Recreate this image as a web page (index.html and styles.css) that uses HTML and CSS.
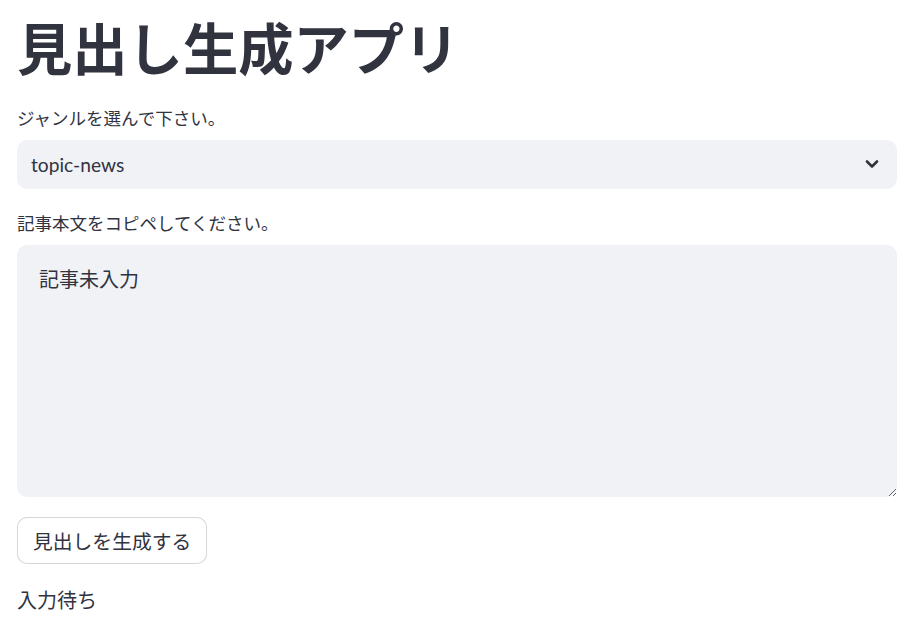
FILE: index.html
```html
<!DOCTYPE html>
<html lang="ja">
<head>
<meta charset="utf-8">
<title>見出し生成アプリ</title>
<link rel="stylesheet" href="styles.css">
</head>
<body>
<main class="app">
  <h1 class="title">見出し生成アプリ</h1>
  <div class="field field-select">
    <label class="label">ジャンルを選んで下さい。</label>
    <div class="select">
      <span class="select-value">topic-news</span>
      <svg class="chevron" width="14" height="10" viewBox="0 0 14 10"><path d="M2 2.5 L7 7.5 L12 2.5" fill="none" stroke="#31333F" stroke-width="2.6" stroke-linecap="round" stroke-linejoin="round"/></svg>
    </div>
  </div>
  <div class="field field-text">
    <label class="label">記事本文をコピペしてください。</label>
    <textarea class="textarea">記事未入力</textarea>
  </div>
  <button class="btn">見出しを生成する</button>
  <p class="status">入力待ち</p>
</main>
</body>
</html>
```
FILE: styles.css
```css
html, body {
  margin: 0;
  padding: 0;
  background: #ffffff;
}
body {
  font-family: "Lato", "Noto Sans CJK JP", sans-serif;
  color: #31333F;
}
.app {
  width: 880px;
  padding: 0 0 0 17px;
  display: flex;
  flex-direction: column;
  align-items: flex-start;
}
.title {
  margin: 13px 0 0 0;
  font-size: 55.3px;
  font-weight: 700;
  line-height: 1.2;
  letter-spacing: 0;
  color: #31333F;
  font-family: "Noto Sans CJK JP", sans-serif;
}
.field {
  width: 880px;
  display: flex;
  flex-direction: column;
}
.field-select { margin-top: 28px; }
.field-text { margin-top: 23.5px; }
.label {
  font-size: 17.5px;
  line-height: 22px;
  font-family: "Noto Sans CJK JP", sans-serif;
  font-weight: 400;
  margin-bottom: 10.5px;
}
.select {
  height: 49px;
  background: #F0F2F6;
  border-radius: 10px;
  display: flex;
  align-items: center;
  justify-content: space-between;
  padding: 0 18px 0 14px;
  box-sizing: border-box;
}
.select-value {
  font-size: 19.2px;
  font-family: "Lato", "Noto Sans CJK JP", sans-serif;
}
.chevron { display: block; }
.textarea {
  width: 880px;
  height: 252px;
  box-sizing: border-box;
  background: #F0F2F6;
  border: none;
  border-radius: 10px;
  padding: 18px 22px;
  font-family: "Noto Sans CJK JP", sans-serif;
  font-size: 20px;
  line-height: 1.6;
  color: #31333F;
  resize: vertical;
  outline: none;
  margin: 0;
  display: block;
}
.btn {
  margin-top: 20px;
  height: 47px;
  padding: 0 15px;
  background: #ffffff;
  border: 1px solid rgba(49, 51, 63, 0.2);
  border-radius: 10px;
  font-family: "Noto Sans CJK JP", sans-serif;
  font-size: 19.8px;
  color: #31333F;
}
.status {
  margin: 20px 0 0 0;
  font-family: "Noto Sans CJK JP", sans-serif;
  font-size: 20px;
  line-height: 1.6;
}
```
